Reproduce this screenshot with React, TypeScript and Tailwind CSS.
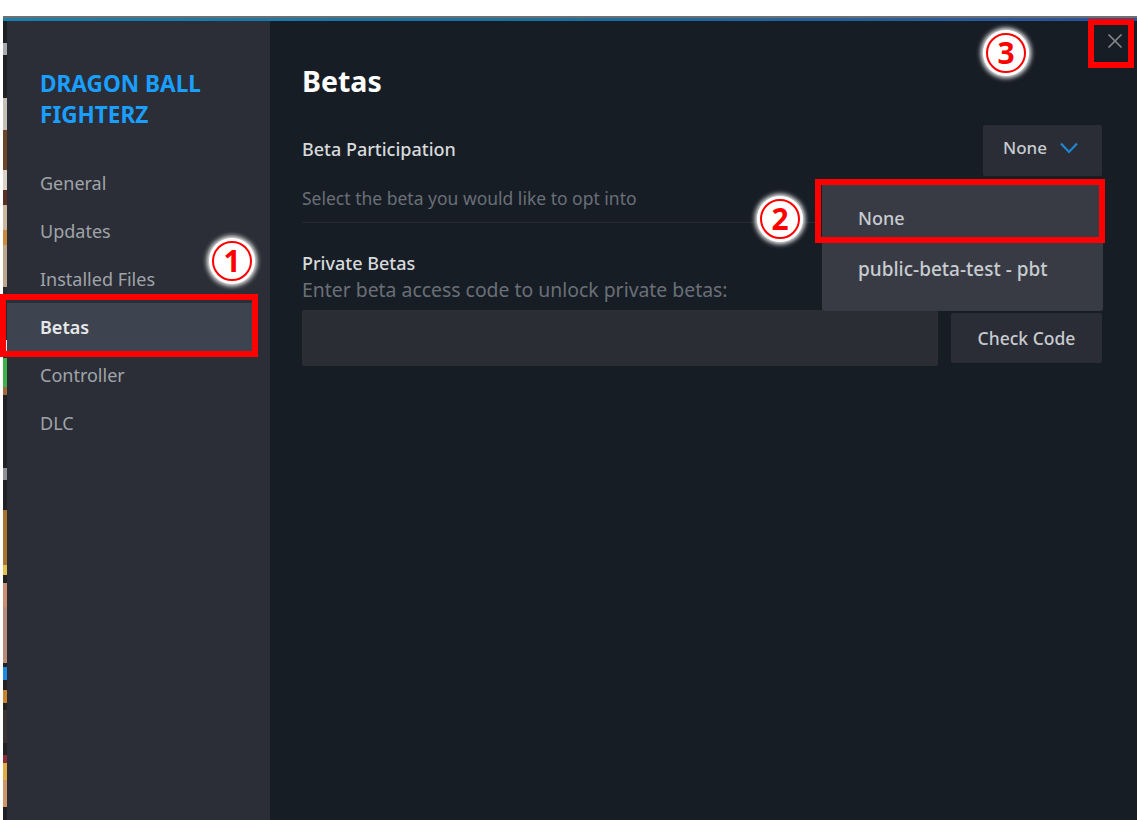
import { X } from 'lucide-react'

const navItems = ['General', 'Updates', 'Installed Files', 'Betas', 'Controller', 'DLC']

// scrap of the game art showing down the left edge of the window
const stripBands = [
  'h-[22px] bg-[#1c1e22]',
  'h-[12px] bg-[#a9abad]',
  'h-[43px] bg-[#1f2125]',
  'h-[32px] bg-[#c4c0b8]',
  'h-[40px] bg-[#6e4526]',
  'h-[20px] bg-[#d8d2c8]',
  'h-[15px] bg-[#5a2e22]',
  'h-[25px] bg-[#c9b7a0]',
  'h-[15px] bg-[#c98a3e]',
  'h-[42px] bg-[#b9a68c]',
  'h-[53px] bg-[#2a2a2e]',
  'h-[12px] bg-[#dfe3e4]',
  'h-[6px] bg-[#2a2a2e]',
  'h-[29px] bg-[#3db24a]',
  'h-[8px] bg-[#a06a3c]',
  'h-[73px] bg-[#1f2125]',
  'h-[12px] bg-[#8e9094]',
  'h-[30px] bg-[#1f2125]',
  'h-[55px] bg-[#a8742f]',
  'h-[10px] bg-[#e2c04f]',
  'h-[8px] bg-[#222222]',
  'h-[24px] bg-[#cc8f6f]',
  'h-[56px] bg-[#b98c79]',
  'h-[4px] bg-[#222222]',
  'h-[13px] bg-[#1e88e5]',
  'h-[10px] bg-[#222222]',
  'h-[13px] bg-[#c9832e]',
  'h-[7px] bg-[#222222]',
  'h-[33px] bg-[#3a3230]',
  'h-[12px] bg-[#222222]',
  'h-[8px] bg-[#8e2a36]',
  'h-[17px] bg-[#e0ad45]',
  'h-[27px] bg-[#cf9568]',
  'flex-1 bg-[#1f2126]',
]

function Marker({ label, className }: { label: string; className: string }) {
  return (
    <div className={`absolute flex h-[46px] w-[46px] items-center justify-center rounded-full bg-white shadow-[0_0_5px_2px_#ffffff] ${className}`}>
      <div className="flex h-[40px] w-[40px] items-center justify-center rounded-full border-2 border-[#ff0000] text-[30px] font-bold leading-none text-[#ff0000]">
        {label}
      </div>
    </div>
  )
}

export default function App() {
  return (
    <div className="relative h-[820px] w-[1137px] overflow-hidden bg-white pl-[3px] pt-4 font-['Noto_Sans',sans-serif]">
      <div className="flex h-full flex-col">
        <div className="h-[2px] bg-[#6c7072]" />
        <div className="h-[3px] bg-gradient-to-r from-[#1c7fa8] via-[#1c6f9c] to-[#2b4f9c]" />

        <div className="flex flex-1">
          <div className="flex w-1 flex-col">
            {stripBands.map((band, i) => (
              <div key={i} className={band} />
            ))}
          </div>

          <aside className="w-[263px] bg-[#2b2e36] pt-[47px]">
            <h2 className="pl-[33px] text-[22.6px] font-bold leading-[31px] text-[#1a9fff]">
              DRAGON BALL
              <br />
              FIGHTERZ
            </h2>
            <nav className="mt-[29px] flex w-[245px] flex-col">
              {navItems.map((item) => (
                <div
                  key={item}
                  className={
                    item === 'Betas'
                      ? 'flex h-[48px] items-center bg-[#3d4450] pl-[33px] text-[18px] font-semibold text-[#e6e8ea]'
                      : 'flex h-[48px] items-center pl-[33px] text-[18px] text-[#a0a4aa]'
                  }
                >
                  {item}
                </div>
              ))}
            </nav>
          </aside>

          <main className="flex-1 bg-[#171d25] pl-[32px] pr-[35px] pt-[40px]">
            <h1 className="text-[28.5px] font-bold leading-[40px] text-white">Betas</h1>

            <div className="mt-[24px] flex h-[51px] items-center justify-between">
              <span className="pb-[2px] text-[18px] font-medium text-[#d8dadc]">Beta Participation</span>
              <div className="flex h-[51px] w-[119px] items-center rounded-[2px] bg-[#2a2d35] pb-[6px] pl-[20px] text-[17px] font-medium text-[#c8cbd0]">
                None
                <svg width="18" height="12" viewBox="0 0 18 12" fill="none" className="ml-[13px]">
                  <polyline points="1,1.5 9,10 17,1.5" stroke="#1f86d0" strokeWidth="2.2" />
                </svg>
              </div>
            </div>

            <p className="mt-[10px] text-[17.5px] leading-[24px] text-[#6a6f77]">
              Select the beta you would like to opt into
            </p>
            <div className="mt-[12px] h-px bg-[#262b33]" />

            <h3 className="mt-[27px] text-[18px] font-medium leading-[26px] text-[#d8dadc]">Private Betas</h3>
            <p className="mt-px text-[19.4px] leading-[26px] text-[#6a6f77]">
              Enter beta access code to unlock private betas:
            </p>

            <div className="mt-[7px] flex items-center gap-[13px]">
              <div className="h-[56px] flex-1 rounded-[2px] bg-[#2a2d34]" />
              <button className="h-[50px] w-[151px] rounded-[2px] bg-[#2a2d35] text-[17.5px] font-medium text-[#c8cbd0]">
                Check Code
              </button>
            </div>
          </main>
        </div>
      </div>

      {/* open dropdown */}
      <div className="absolute left-[822px] top-[183px] flex h-[128px] w-[281px] flex-col rounded-[3px] bg-[#383b44] pl-[36px] pt-[10px] text-[18px] font-medium text-[#c8cbd0]">
        <div className="flex h-[50px] items-center">None</div>
        <div className="flex h-[52px] items-center text-[19px]">public-beta-test - pbt</div>
      </div>

      <X size={24} strokeWidth={1.75} className="absolute left-[1103px] top-[29px] text-[#83878d]" />

      {/* red callouts */}
      <div className="absolute left-0 top-[294px] h-[63px] w-[258px] border-[6px] border-[#ff0000]" />
      <div className="absolute left-[815px] top-[179px] h-[64px] w-[290px] border-[6px] border-[#ff0000]" />
      <div className="absolute left-[1088px] top-[19px] h-[49px] w-[46px] border-[6px] border-[#ff0000]" />

      <Marker label="1" className="left-[209px] top-[238px]" />
      <Marker label="2" className="left-[757px] top-[196px]" />
      <Marker label="3" className="left-[983px] top-[30px]" />
    </div>
  )
}
